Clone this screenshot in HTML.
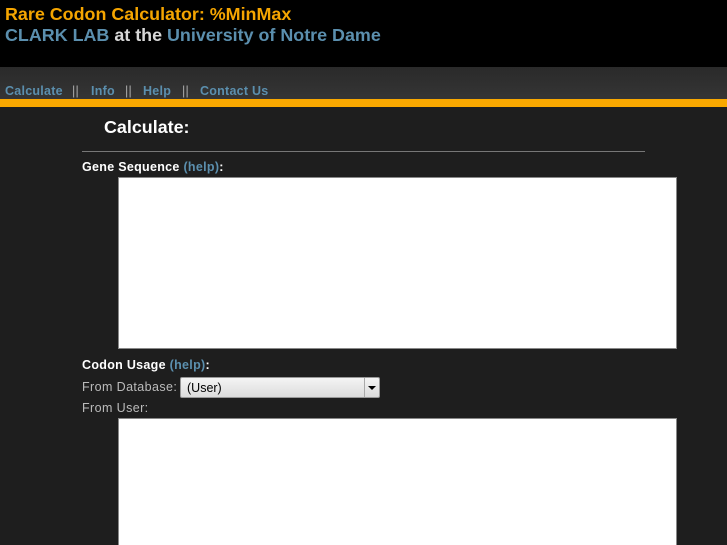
<!DOCTYPE html>
<html><head><style>
html,body{margin:0;width:727px;height:545px;overflow:hidden;}
body{background:#1e1e1e;font-family:"Liberation Sans",sans-serif;position:relative;}
.hdr{position:absolute;left:0;top:0;width:727px;height:67px;background:#000;}
.t1{position:absolute;left:5px;top:4px;color:#f5a500;font-weight:bold;font-size:17.9px;}
.t2{position:absolute;left:5px;top:25px;color:#d8d8d8;font-weight:bold;font-size:17.9px;}
.b{color:#5b8fae}
.nav{position:absolute;left:0;top:67px;width:727px;height:32px;background:linear-gradient(#2a2a2a,#353535);}
.nav div{position:absolute;top:17px;font-size:12.5px;font-weight:bold;color:#5b8fae;letter-spacing:.25px}
.nav span{color:#aaa;font-weight:normal}
.or{position:absolute;left:0;top:99px;width:727px;height:8px;background:#f9a800;}
.h{position:absolute;left:104px;top:117px;color:#fff;font-weight:bold;font-size:17.9px;}
.hr{position:absolute;left:82px;top:151px;width:563px;height:1px;background:#777;}
.l{position:absolute;left:82px;color:#fff;font-weight:bold;font-size:12.5px;letter-spacing:.3px}
.s{position:absolute;left:82px;color:#bbb;font-size:12.5px;letter-spacing:.4px}
.ta{position:absolute;left:118px;width:559px;background:#fff;border:1px solid #888;box-sizing:border-box;}
.sel{position:absolute;left:180px;top:377px;width:200px;height:21px;background:linear-gradient(#f4f4f4,#dcdcdc);border:1px solid #999;box-sizing:border-box;border-radius:2px;font-size:12.5px;color:#000;padding:3px 6px;}
.sel:after{content:"";position:absolute;right:0;top:0;width:14px;height:19px;border-left:1px solid #aaa;}
.arr{position:absolute;right:3px;top:8px;border-left:4px solid transparent;border-right:4px solid transparent;border-top:4px solid #000;}
</style></head><body>
<div class="hdr"></div>
<div class="t1">Rare Codon Calculator: %MinMax</div>
<div class="t2"><span class="b">CLARK LAB</span> at the <span class="b">University of Notre Dame</span></div>
<div class="nav">
<div style="left:5px">Calculate</div><div style="left:72px"><span>||</span></div>
<div style="left:91px">Info</div><div style="left:125px"><span>||</span></div>
<div style="left:143px">Help</div><div style="left:182px"><span>||</span></div>
<div style="left:200px">Contact Us</div>
</div>
<div class="or"></div>
<div class="h">Calculate:</div>
<div class="hr"></div>
<div class="l" style="top:160px">Gene Sequence <span class="b">(help)</span>:</div>
<div class="ta" style="top:177px;height:172px"></div>
<div class="l" style="top:358px">Codon Usage <span class="b">(help)</span>:</div>
<div class="s" style="top:380px">From Database:</div>
<div class="sel">(User)<div class="arr"></div></div>
<div class="s" style="top:401px">From User:</div>
<div class="ta" style="top:418px;height:140px"></div>
</body></html>
